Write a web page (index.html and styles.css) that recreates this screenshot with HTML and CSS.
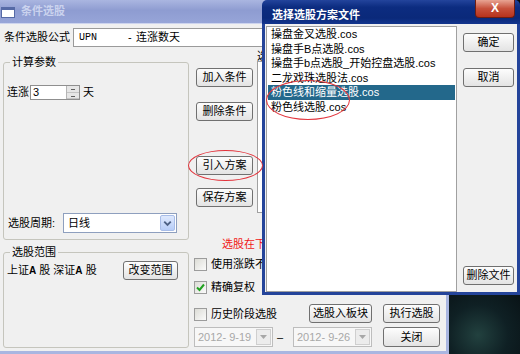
FILE: index.html
```html
<!DOCTYPE html>
<html lang="zh-CN">
<head>
    <meta charset="UTF-8">
    <title>条件选股</title>
    <link rel="stylesheet" href="styles.css">
</head>
<body>
<div class="desktop">
    <!-- main window: 条件选股 (inactive) -->
    <div class="window main-window">
        <div class="titlebar">
            <span class="app-icon"></span>
            <span class="title">条件选股</span>
        </div>
        <div class="client">
            <div class="formula-row">
                <label class="formula-label">条件选股公式</label>
                <div class="textbox formula-box"><span class="formula-code">UPN</span><span class="formula-dash">-</span>连涨数天</div>
            </div>

            <div class="main-grid">
                <div class="left-col">
                    <fieldset class="group">
                        <legend>计算参数</legend>
                        <div class="calc-body">
                            <div class="spin-row">
                                <span>连涨</span>
                                <div class="spin">
                                    <span class="spin-value">3</span>
                                    <span class="spin-btns"><i></i><i></i></span>
                                </div>
                                <span class="spin-unit">天</span>
                            </div>
                            <div class="period-row">
                                <span class="period-label">选股周期:</span>
                                <div class="combo">
                                    <span class="combo-value">日线</span>
                                    <span class="combo-btn">
                                        <svg width="14" height="16" viewBox="0 0 14 16"><path d="M3.5 6.5 L7 10 L10.5 6.5" fill="none" stroke="#4d6185" stroke-width="2"/></svg>
                                    </span>
                                </div>
                            </div>
                        </div>
                    </fieldset>
                    <fieldset class="group range">
                        <legend>选股范围</legend>
                        <div class="range-body">
                            <span>上证<b>A</b> 股 深证<b>A</b> 股</span>
                            <button class="btn btn-range">改变范围</button>
                        </div>
                    </fieldset>
                </div>

                <div class="right-col">
                    <div class="cond-area">
                        <div class="cond-buttons">
                            <button class="btn">加入条件</button>
                            <button class="btn btn-del">删除条件</button>
                            <button class="btn btn-load">引入方案</button>
                            <button class="btn btn-save">保存方案</button>
                        </div>
                        <div class="cond-list">
                            <div class="cond-title">选</div>
                            <div class="cond-box"></div>
                        </div>
                    </div>
                    <div class="note">选股在下载完整数据后进行</div>
                    <label class="check check-first"><span class="box"></span>使用涨跌不停板过滤</label>
                    <label class="check check-second"><span class="box"><svg width="11" height="11" viewBox="0 0 11 11"><path d="M2 5.5 L4.5 8 L9 2.5" fill="none" stroke="#21a121" stroke-width="2"/></svg></span>精确复权</label>
                    <div class="bottom-grid">
                        <label class="check check-history"><span class="box"></span>历史阶段选股</label>
                        <button class="btn btn-block">选股入板块</button>
                        <button class="btn btn-run">执行选股</button>
                        <div class="datebox">
                            <span>2012- 9-19</span>
                            <span class="date-btn"><svg width="9" height="6" viewBox="0 0 9 6"><path d="M1 1 L4.5 5 L8 1 Z" fill="#a7a7a7"/></svg></span>
                        </div>
                        <span class="date-dash">–</span>
                        <div class="datebox">
                            <span>2012- 9-26</span>
                            <span class="date-btn"><svg width="9" height="6" viewBox="0 0 9 6"><path d="M1 1 L4.5 5 L8 1 Z" fill="#a7a7a7"/></svg></span>
                        </div>
                        <button class="btn btn-close">关闭</button>
                    </div>
                </div>
            </div>
        </div>
    </div>

    <!-- dialog: 选择选股方案文件 (active) -->
    <div class="window dialog">
        <div class="titlebar">
            <span class="title">选择选股方案文件</span>
            <span class="close-btn">X</span>
        </div>
        <div class="dialog-frame">
            <ul class="file-list">
                <li>操盘金叉选股.cos</li>
                <li>操盘手B点选股.cos</li>
                <li>操盘手b点选股_开始控盘选股.cos</li>
                <li>二龙戏珠选股法.cos</li>
                <li class="selected">粉色线和缩量选股.cos</li>
                <li>粉色线选股.cos</li>
            </ul>
            <div class="dialog-buttons">
                <button class="btn">确定</button>
                <button class="btn btn-cancel">取消</button>
                <button class="btn btn-delete">删除文件</button>
            </div>
        </div>
    </div>

    <!-- red hand-drawn marks -->
    <span class="mark mark-plan"></span>
    <span class="mark mark-file"></span>
</div>
</body>
</html>
```

FILE: styles.css
```css
* {
    margin: 0;
    padding: 0;
    box-sizing: border-box;
}

body {
    width: 520px;
    height: 354px;
    overflow: hidden;
    font-family: "Liberation Sans", "Noto Sans CJK SC", sans-serif;
    font-size: 11px;
    line-height: 13px;
    color: #000;
}

.desktop {
    position: relative;
    width: 520px;
    height: 354px;
    background: radial-gradient(circle at 478px 335px, #22413f 0, #0f2024 30px, #04080b 80px);
}

button {
    font: inherit;
    color: inherit;
}

/* windows */
.window {
    position: absolute;
    top: 0;
    display: flex;
    flex-direction: column;
}

.titlebar {
    height: 24px;
    flex-shrink: 0;
    display: flex;
    align-items: center;
}

.title {
    font-weight: bold;
}

.main-window {
    left: 0;
    width: 449px;
    height: 354px;
    background: #f0f0f0;
    border-right: 3px solid #a9b6e1;
    border-bottom: 3px solid #a9b6e1;
}

.main-window .titlebar {
    background: linear-gradient(#aab6e0, #8e9cd1 45%, #97a5d8);
    border-bottom: 1px solid #cdd4ee;
    padding-left: 1px;
}

.main-window .title {
    color: #cbd3ee;
}

.app-icon {
    width: 14px;
    height: 11px;
    margin: 2px 6px 0 0;
    background: #fff;
    border: 1px solid #566aa6;
    border-top-width: 3px;
}

.client {
    flex: 1;
    padding: 4px 0 0 3px;
}

/* formula */
.formula-row {
    display: flex;
    align-items: center;
    height: 19px;
}

.formula-label {
    width: 70px;
    padding-left: 1px;
}

.formula-box {
    width: 360px;
    height: 19px;
    display: flex;
    align-items: center;
    padding-left: 5px;
    background: #fff;
    border: 1px solid #9a9a9a;
}

.formula-code {
    width: 49px;
    font-family: "Liberation Mono", monospace;
    font-size: 10px;
}

.formula-dash {
    width: 8px;
}

.main-grid {
    margin-top: 8px;
    display: grid;
    grid-template-columns: 186px 1fr;
    column-gap: 5px;
}

/* group boxes */
.group {
    border: 1px solid #c5c5bd;
    border-radius: 3px;
}

.group legend {
    margin-left: 6px;
    padding: 0 2px;
    line-height: 14px;
}

.calc-body {
    height: 170px;
    padding: 16px 0 6px 3px;
    display: flex;
    flex-direction: column;
    justify-content: space-between;
}

.spin-row {
    display: flex;
    align-items: center;
    height: 15px;
}

.spin {
    display: flex;
    width: 50px;
    height: 15px;
    margin-left: 1px;
    border: 1px solid #8f8f8f;
    background: #fff;
}

.spin-value {
    flex: 1;
    padding-left: 2px;
    line-height: 13px;
}

.spin-btns {
    width: 13px;
    display: flex;
    flex-direction: column;
    background: #e6e6e6;
    border-left: 1px solid #b5b5b5;
}

.spin-btns i {
    flex: 1;
    position: relative;
    border-bottom: 1px solid #c4c4c4;
}

.spin-btns i::after {
    content: "";
    position: absolute;
    left: 4px;
    top: 3px;
    width: 4px;
    height: 1px;
    background: #606060;
}

.spin-unit {
    margin-left: 3px;
}

.period-row {
    display: flex;
    align-items: center;
    height: 20px;
}

.period-label {
    width: 56px;
    padding-left: 1px;
}

.combo {
    width: 114px;
    height: 20px;
    display: flex;
    align-items: center;
    justify-content: space-between;
    padding: 0 1px 0 4px;
    background: #fff;
    border: 1px solid #8e9fbe;
}

.combo-btn {
    width: 15px;
    height: 16px;
    display: flex;
    align-items: center;
    justify-content: center;
    background: linear-gradient(#dfe9fd, #b7cdf8);
    border: 1px solid #a8bde8;
    border-radius: 2px;
}

.range {
    margin-top: 5px;
}

.range-body {
    height: 88px;
    padding: 2px 10px 0 3px;
    display: flex;
    align-items: flex-start;
    justify-content: space-between;
}

.range-body span {
    line-height: 19px;
}

.range-body b {
    font-size: 10px;
}

/* buttons */
.btn {
    height: 19px;
    width: 57px;
    border: 1px solid #707070;
    border-radius: 3px;
    background: linear-gradient(#fdfdfd, #f0f0f0 50%, #e3e3e3);
    line-height: 17px;
    text-align: center;
}

.btn-range {
    width: 55px;
}

/* right column */
.cond-area {
    display: flex;
    height: 158px;
}

.cond-buttons {
    display: flex;
    flex-direction: column;
    padding: 13px 0 0 2px;
}

.btn-del {
    margin-top: 15px;
}

.btn-load {
    margin-top: 35px;
}

.btn-save {
    margin-top: 13px;
}

.cond-list {
    flex: 1;
    display: flex;
    flex-direction: column;
    margin: -4px 6px 0 4px;
}

.cond-title {
    height: 10px;
    line-height: 10px;
}

.cond-box {
    flex: 1;
    background: #fff;
    border: 1px solid #a0a0a0;
}

.note {
    margin: 24px 0 0 28px;
    line-height: 14px;
    color: #f01818;
}

.check {
    display: flex;
    align-items: center;
    height: 13px;
}

.box {
    width: 13px;
    height: 13px;
    margin-right: 4px;
    flex-shrink: 0;
    display: flex;
    align-items: center;
    justify-content: center;
    border: 1px solid #9c9c9c;
    background: linear-gradient(135deg, #dcdcd6, #fbfbfb);
}

.check-first {
    margin-top: 7px;
}

.check-second {
    margin-top: 10px;
}

.bottom-grid {
    margin-top: 10px;
    display: grid;
    grid-template-columns: 79px 20px 79px 11px 57px;
    grid-template-rows: 19px 20px;
    row-gap: 4px;
}

.check-history {
    grid-column: 1 / 3;
    align-self: end;
    margin-bottom: 2px;
}

.btn-block {
    width: 63px;
    justify-self: end;
}

.btn-run {
    grid-column: 5;
}

.datebox {
    display: flex;
    align-items: center;
    justify-content: space-between;
    padding: 0 1px 0 3px;
    color: #a8a8a8;
    background: #f7f7f7;
    border: 1px solid #bdbdbd;
}

.date-btn {
    width: 15px;
    height: 16px;
    display: flex;
    align-items: center;
    justify-content: center;
    background: #ececec;
    border: 1px solid #cfcfcf;
}

.date-dash {
    text-align: center;
    line-height: 20px;
    margin-left: -6px;
}

.btn-close {
    grid-column: 5;
    height: 20px;
}

/* dialog */
.dialog {
    left: 262px;
    width: 258px;
    height: 295px;
}

.dialog .titlebar {
    justify-content: space-between;
    align-items: flex-start;
    padding-left: 10px;
    background: linear-gradient(#23449c, #0c2c80 30%, #0a297a 75%, #13358e);
    border-radius: 5px 5px 0 0;
}

.dialog .title {
    color: #fff;
    line-height: 13px;
    margin-top: 9px;
}

.close-btn {
    width: 40px;
    height: 18px;
    margin-right: 5px;
    color: #fff;
    font-weight: bold;
    font-size: 12px;
    line-height: 16px;
    text-align: center;
    background: linear-gradient(#e8a493, #c7513c 50%, #b8321c);
    border: 1px solid #6e1d12;
    border-top: 0;
    border-radius: 0 0 4px 4px;
}

.dialog-frame {
    flex: 1;
    display: flex;
    padding-top: 2px;
    background: #f0f0f0;
    border: 3px solid #24449a;
    border-top: 0;
}

.file-list {
    list-style: none;
    width: 191px;
    margin-left: 1px;
    background: #fff;
    border: 1px solid #a0a0a0;
}

.file-list li {
    height: 14.6px;
    line-height: 14.6px;
    margin: 0 1px;
    padding-left: 3px;
    white-space: nowrap;
}

.file-list li.selected {
    background: #23688b;
    color: #fff;
}

.dialog-buttons {
    display: flex;
    flex-direction: column;
    margin-left: 6px;
}

.dialog-buttons .btn {
    width: 51px;
    margin-top: 7px;
}

.dialog-buttons .btn-cancel {
    margin-top: 16px;
}

.dialog-buttons .btn-delete {
    margin-top: auto;
    margin-bottom: 7px;
}

/* red annotation ellipses */
.mark {
    position: absolute;
    border: 1px solid #e2343c;
    border-radius: 50%;
}

.mark-plan {
    left: 188px;
    top: 150px;
    width: 75px;
    height: 31px;
}

.mark-file {
    left: 266px;
    top: 80px;
    width: 84px;
    height: 40px;
}
```
